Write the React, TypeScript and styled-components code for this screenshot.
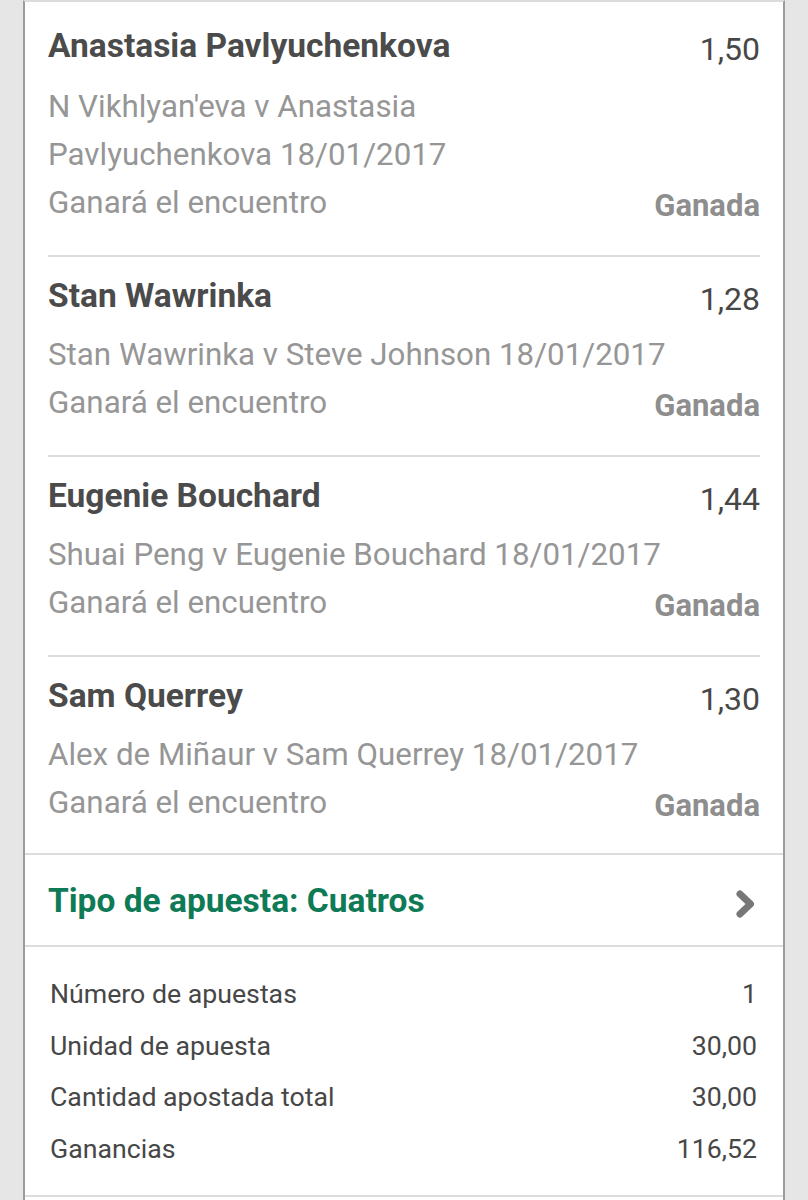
import React from 'react';
import styled, { createGlobalStyle } from 'styled-components';

interface ISelection {
  player: string;
  odds: string;
  match: string;
  market: string;
  result: string;
}

const selections: ISelection[] = [
  {
    player: 'Anastasia Pavlyuchenkova',
    odds: '1,50',
    match: "N Vikhlyan'eva v Anastasia\nPavlyuchenkova 18/01/2017",
    market: 'Ganará el encuentro',
    result: 'Ganada',
  },
  {
    player: 'Stan Wawrinka',
    odds: '1,28',
    match: 'Stan Wawrinka v Steve Johnson 18/01/2017',
    market: 'Ganará el encuentro',
    result: 'Ganada',
  },
  {
    player: 'Eugenie Bouchard',
    odds: '1,44',
    match: 'Shuai Peng v Eugenie Bouchard 18/01/2017',
    market: 'Ganará el encuentro',
    result: 'Ganada',
  },
  {
    player: 'Sam Querrey',
    odds: '1,30',
    match: 'Alex de Miñaur v Sam Querrey 18/01/2017',
    market: 'Ganará el encuentro',
    result: 'Ganada',
  },
];

const summary = [
  { label: 'Número de apuestas', value: '1' },
  { label: 'Unidad de apuesta', value: '30,00' },
  { label: 'Cantidad apostada total', value: '30,00' },
  { label: 'Ganancias', value: '116,52' },
];

const GlobalStyle = createGlobalStyle`
  html, body {
    margin: 0;
    padding: 0;
    background: #e6e6e6;
    font-family: Roboto, 'Noto Sans', Arial, sans-serif;
  }
`;

const Page = styled.div`
  padding-left: 23px;
  width: 762px;
`;

const Card = styled.div`
  background: #fff;
  border-left: 2px solid #9c9c9c;
  border-right: 2px solid #9c9c9c;
  border-top: 2px solid #dcdcdc;
  min-height: 1198px;
`;

const List = styled.div`
  padding: 0 23px;
`;

const TopRow = styled.div`
  display: flex;
  justify-content: space-between;
  align-items: baseline;
`;

const Player = styled.div`
  font-size: 33.5px;
  font-weight: 700;
  color: #4b4b4b;
  line-height: 40px;
`;

const Odds = styled.div`
  font-size: 32px;
  color: #474747;
  line-height: 40px;
  position: relative;
  top: 3px;
`;

const Match = styled.div`
  margin-top: 15px;
  font-size: 31.3px;
  color: #969696;
  line-height: 48px;
  white-space: pre-line;
`;

const Item = styled.div`
  padding: 19px 0 28px;
  border-bottom: 2px solid #dcdcdc;
  &:first-child {
    padding-top: 24px;
  }
  &:first-child ${Match} {
    margin-top: 17px;
  }
  &:last-child {
    border-bottom: 0;
    padding-bottom: 26px;
  }
`;

const BottomRow = styled.div`
  display: flex;
  justify-content: space-between;
  align-items: baseline;
  line-height: 48px;
`;

const Market = styled.div`
  font-size: 31.3px;
  color: #969696;
`;

const Result = styled.div`
  font-size: 31px;
  font-weight: 700;
  color: #8e8e8e;
  position: relative;
  top: 3px;
`;

const TypeRow = styled.div`
  display: flex;
  justify-content: space-between;
  align-items: center;
  height: 90px;
  padding: 0 26px 0 23px;
  border-top: 2px solid #dcdcdc;
  border-bottom: 2px solid #dcdcdc;
`;

const TypeLabel = styled.div`
  font-size: 33.5px;
  font-weight: 700;
  color: #0f7b56;
`;

const ChevronIcon = styled.svg`
  margin-top: 8px;
`;

const Summary = styled.div`
  padding: 22px 26px 19px 25px;
  border-bottom: 2px solid #dcdcdc;
`;

const SummaryRow = styled.div`
  display: flex;
  justify-content: space-between;
  font-size: 26.7px;
  color: #474747;
  line-height: 51.67px;
`;

const Chevron = () => (
  <ChevronIcon width="22" height="30" viewBox="0 0 22 30">
    <path
      d="M5 5 L15.5 15 L5 25"
      fill="none"
      stroke="#777"
      strokeWidth="7"
      strokeLinejoin="round"
      strokeLinecap="round"
    />
  </ChevronIcon>
);

const App: React.FC = () => {
  return (
    <Page>
      <GlobalStyle />
      <Card>
        <List>
          {selections.map((s) => (
            <Item key={s.player}>
              <TopRow>
                <Player>{s.player}</Player>
                <Odds>{s.odds}</Odds>
              </TopRow>
              <Match>{s.match}</Match>
              <BottomRow>
                <Market>{s.market}</Market>
                <Result>{s.result}</Result>
              </BottomRow>
            </Item>
          ))}
        </List>
        <TypeRow>
          <TypeLabel>Tipo de apuesta: Cuatros</TypeLabel>
          <Chevron />
        </TypeRow>
        <Summary>
          {summary.map((r) => (
            <SummaryRow key={r.label}>
              <span>{r.label}</span>
              <span>{r.value}</span>
            </SummaryRow>
          ))}
        </Summary>
      </Card>
    </Page>
  );
};

export default App;
